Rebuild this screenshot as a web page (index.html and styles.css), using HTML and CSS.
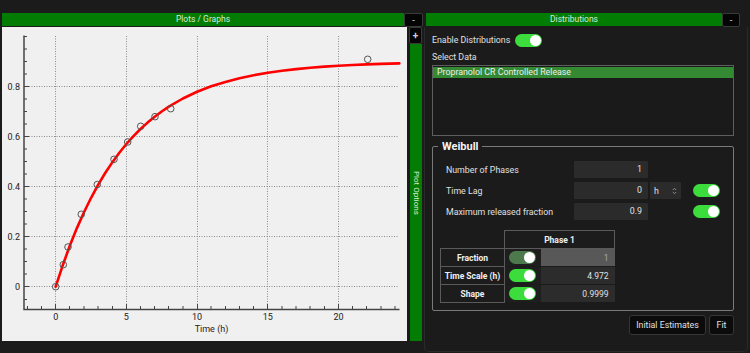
FILE: index.html
```html
<!DOCTYPE html>
<html>
<head>
<meta charset="utf-8">
<link rel="stylesheet" href="styles.css">
</head>
<body>
<div class="app">
  <section class="left">
    <div class="hdr">
      <div class="hdr-title">Plots / Graphs</div>
      <button class="mini">-</button>
    </div>
    <div class="left-body">
      <div class="plot">
        <svg width="405" height="314" viewBox="2 27 405 314" xmlns="http://www.w3.org/2000/svg">
          <g class="grid">
            <path d="M55.5 36V309M126.5 36V309M197.5 36V309M267.5 36V309M338.5 36V309"/>
            <path d="M24 286.5H399M24 236.5H399M24 186.5H399M24 136.5H399M24 86.5H399"/>
          </g>
          <g class="axis">
            <path d="M24 35.5V309.5H399.5"/>
            <path class="ticks" d="M55.5 309v-5M126.5 309v-5M197.5 309v-5M267.5 309v-5M338.5 309v-5
              M27.5 309v-3M41.5 309v-3M69.5 309v-3M84 309v-3M98 309v-3M112.5 309v-3M140.5 309v-3M154.5 309v-3M168.5 309v-3M183 309v-3
              M211 309v-3M225.5 309v-3M239.5 309v-3M253.5 309v-3M282 309v-3M296 309v-3M310 309v-3M324.5 309v-3M352.5 309v-3M366.5 309v-3M381 309v-3M395 309v-3
              M24 286.5h5M24 236.5h5M24 186.5h5M24 136.5h5M24 86.5h5
              M24 299.5h3M24 274h3M24 261.5h3M24 249h3M24 224h3M24 211.5h3M24 199h3M24 174h3M24 161.5h3M24 149h3M24 124h3M24 111.5h3M24 99h3M24 74h3M24 61.5h3M24 49h3M24 36.5h3"/>
          </g>
          <g class="labels">
            <text x="20" y="289.7" text-anchor="end">0</text>
            <text x="20" y="239.7" text-anchor="end">0.2</text>
            <text x="20" y="189.7" text-anchor="end">0.4</text>
            <text x="20" y="139.7" text-anchor="end">0.6</text>
            <text x="20" y="89.7" text-anchor="end">0.8</text>
            <text x="55.7" y="320" text-anchor="middle">0</text>
            <text x="126.4" y="320" text-anchor="middle">5</text>
            <text x="197.1" y="320" text-anchor="middle">10</text>
            <text x="267.8" y="320" text-anchor="middle">15</text>
            <text x="338.5" y="320" text-anchor="middle">20</text>
            <text x="211.5" y="332" text-anchor="middle">Time (h)</text>
          </g>
          <polyline class="curve" points="55.7,286.7 62.8,265.2 69.8,245.7 76.9,228.1 84.0,212.2 91.1,197.8 98.1,184.8 105.2,173.0 112.3,162.4 119.3,152.7 126.4,144.0 133.5,136.1 140.5,129.0 147.6,122.6 154.7,116.7 161.7,111.5 168.8,106.7 182.9,98.5 197.1,91.8 211.2,86.3 225.4,81.9 239.5,78.2 253.7,75.2 267.8,72.7 282.0,70.7 296.1,69.1 310.2,67.7 324.4,66.6 338.5,65.7 352.6,65.0 366.8,64.4 380.9,63.9 399.3,63.4"/>
          <g class="pts">
            <circle cx="55.7" cy="286.7" r="3.3"/>
            <circle cx="63.3" cy="264.7" r="3.3"/>
            <circle cx="68" cy="247" r="3.3"/>
            <circle cx="81.3" cy="214.3" r="3.3"/>
            <circle cx="97.3" cy="184.5" r="3.3"/>
            <circle cx="114" cy="159.3" r="3.3"/>
            <circle cx="127.7" cy="142" r="3.3"/>
            <circle cx="140.7" cy="126.3" r="3.3"/>
            <circle cx="155" cy="116.7" r="3.3"/>
            <circle cx="170.7" cy="108.7" r="3.3"/>
            <circle cx="367.7" cy="59.3" r="3.3"/>
          </g>
        </svg>
      </div>
      <div class="side">
        <button class="mini plus">+</button>
        <div class="side-bar"><span>Plot Options</span></div>
      </div>
    </div>
  </section>

  <section class="right">
    <div class="hdr">
      <div class="hdr-title rt">Distributions</div>
      <button class="mini rmini">-</button>
    </div>
    <div class="panel">
      <div class="enable-row">
        <span>Enable Distributions</span>
        <span class="toggle"></span>
      </div>
      <div class="caption">Select Data</div>
      <div class="list">
        <div class="list-item">Propranolol CR Controlled Release</div>
      </div>
      <fieldset class="group">
        <legend>Weibull</legend>
        <div class="form">
          <span class="lbl">Number of Phases</span>
          <span class="field">1</span>
          <span></span>
          <span></span>

          <span class="lbl">Time Lag</span>
          <span class="field">0</span>
          <span class="unit">h
            <svg width="5" height="8" viewBox="0 0 5 8"><path d="M0.8 3L2.5 1.3L4.2 3M0.8 5L2.5 6.7L4.2 5" fill="none" stroke="#9a9a9a" stroke-width="0.9"/></svg>
          </span>
          <span class="toggle"></span>

          <span class="lbl">Maximum released fraction</span>
          <span class="field">0.9</span>
          <span></span>
          <span class="toggle"></span>
        </div>
        <table class="phases">
          <tr>
            <th class="blank"></th>
            <th class="head" colspan="2">Phase 1</th>
          </tr>
          <tr>
            <th class="rowlbl">Fraction</th>
            <td class="tog"><span class="toggle dim"></span></td>
            <td class="val disabled">1</td>
          </tr>
          <tr>
            <th class="rowlbl">Time Scale (h)</th>
            <td class="tog"><span class="toggle"></span></td>
            <td class="val">4.972</td>
          </tr>
          <tr>
            <th class="rowlbl">Shape</th>
            <td class="tog"><span class="toggle"></span></td>
            <td class="val">0.9999</td>
          </tr>
        </table>
      </fieldset>
      <div class="actions">
        <button class="btn first">Initial Estimates</button>
        <button class="btn fit">Fit</button>
      </div>
    </div>
  </section>
</div>
</body>
</html>
```

FILE: styles.css
```css
* { box-sizing: border-box; }

html, body {
  margin: 0;
  padding: 0;
}

body {
  width: 750px;
  height: 353px;
  overflow: hidden;
  background: #1b1b1b;
  font-family: Roboto, "Liberation Sans", sans-serif;
  color: #e0e0e0;
  font-size: 8.8px;
}

.app {
  display: flex;
  gap: 1px;
  padding: 13px 0 0 2px;
}

/* headers */
.hdr {
  display: flex;
  align-items: flex-start;
  height: 14px;
}

.hdr-title {
  height: 13px;
  background: #037c03;
  color: #d8ecd8;
  font-size: 8.5px;
  line-height: 13px;
  text-align: center;
}

.left .hdr-title { width: 402px; }
.rt { width: 296px; margin-left: 2px; }

.mini {
  width: 19px;
  height: 14px;
  padding: 0;
  margin: 0;
  background: #050505;
  border: 1px solid #3a3a3a;
  border-radius: 2px;
  color: #d0d0d0;
  font-family: Roboto, "Liberation Sans", sans-serif;
  font-size: 8px;
  line-height: 11px;
  font-weight: bold;
}

.rmini { width: 18px; }

/* left column */
.left {
  width: 421px;
  display: flex;
  flex-direction: column;
}

.left-body {
  display: flex;
  height: 314px;
}

.plot {
  width: 405px;
  height: 314px;
  background: #f0f0f0;
}

.plot svg { display: block; }

.grid path {
  fill: none;
  stroke: #8c8c8c;
  stroke-width: 1;
  stroke-dasharray: 1 1.5;
}

.axis path {
  fill: none;
  stroke: #444;
  stroke-width: 1.5;
}

.axis .ticks { stroke-width: 1; }

.labels text {
  font-family: Roboto, "Liberation Sans", sans-serif;
  font-size: 9px;
  fill: #222;
}

.curve {
  fill: none;
  stroke: #ff0000;
  stroke-width: 2.6;
  stroke-linejoin: round;
  stroke-linecap: round;
}

.pts circle {
  fill: none;
  stroke: #555;
  stroke-width: 1;
}

.side {
  width: 14px;
  margin-left: 2px;
  display: flex;
  flex-direction: column;
}

.plus {
  width: 13px;
  height: 17px;
  font-size: 10px;
  line-height: 13px;
}

.side-bar {
  flex: 1;
  width: 12px;
  margin-left: 1px;
  background: #037c03;
  display: flex;
  align-items: center;
  justify-content: center;
}

.side-bar span {
  writing-mode: vertical-rl;
  font-size: 8px;
  color: #d8ecd8;
  line-height: 12px;
}

/* right column */
.right {
  width: 324px;
  display: flex;
  flex-direction: column;
}

.panel {
  height: 325px;
  border: 1px solid #2a2a2a;
  border-top: none;
  border-radius: 0 0 5px 5px;
  padding: 6px 13px 0 7px;
  display: flex;
  flex-direction: column;
}

.enable-row {
  display: flex;
  align-items: center;
  gap: 5px;
  height: 14px;
}

.toggle {
  display: inline-block;
  position: relative;
  width: 27px;
  height: 13px;
  border-radius: 7px;
  background: #3ddc3d;
}

.toggle::after {
  content: "";
  position: absolute;
  right: 1px;
  top: 1px;
  width: 11px;
  height: 11px;
  border-radius: 50%;
  background: #fff;
}

.toggle.dim { background: #4d7a4d; }

.caption {
  margin-top: 4px;
  height: 12px;
  line-height: 12px;
}

.list {
  margin-top: 2px;
  height: 71px;
  border: 1px solid #5e5e5e;
  padding-top: 1px;
  background: #1a1a1a;
}

.list-item {
  height: 11px;
  line-height: 11px;
  background: #338a33;
  color: #f0f0f0;
  padding-left: 4px;
}

.group {
  margin: 4px 0 0 0;
  border: 1px solid #7a7a7a;
  border-radius: 2px;
  padding: 8px 0 7px 13px;
  min-width: 0;
}

.group legend {
  margin-left: -8px;
  padding: 0 4px;
  font-size: 11px;
  font-weight: bold;
  line-height: 13px;
  color: #f4f4f4;
}

.form {
  display: grid;
  grid-template-columns: 126px 74px 31px 27px;
  column-gap: 2px;
  row-gap: 4px;
  grid-auto-rows: 17px;
  align-items: center;
}

.form .toggle { margin-left: 10px; }

.field {
  height: 17px;
  line-height: 17px;
  background: #2b2b2b;
  text-align: right;
  padding-right: 6px;
  border-radius: 1px;
}

.unit {
  height: 17px;
  background: #2b2b2b;
  border-radius: 1px;
  display: flex;
  align-items: center;
  justify-content: space-between;
  padding: 0 4px 0 4px;
}

.phases {
  margin: 10px 0 0 -6px;
  border-collapse: collapse;
  font-size: 8.5px;
}

.phases th, .phases td {
  padding: 0;
  height: 18px;
}

.phases .blank { width: 64px; }

.phases .head {
  border: 1px solid #5a5a5a;
  background: #1c1c1c;
  font-weight: bold;
  color: #f0f0f0;
  text-align: center;
}

.rowlbl {
  width: 64px;
  border: 1px solid #5a5a5a;
  background: #1c1c1c;
  font-weight: bold;
  color: #f0f0f0;
  text-align: center;
  white-space: nowrap;
}

.tog {
  width: 36px;
  background: #1e1e1e;
  text-align: center;
  border-bottom: 1px solid #1b1b1b;
}

.tog .toggle { vertical-align: middle; }

.val {
  width: 74px;
  background: #2c2c2c;
  text-align: right;
  padding-right: 6px !important;
  border-bottom: 1px solid #1b1b1b;
}

.val.disabled {
  background: #585858;
  color: #a8a8a8;
}

.actions {
  display: flex;
  justify-content: flex-end;
  gap: 3px;
  margin-top: 4px;
}

.btn {
  height: 20px;
  padding: 0 4px;
  margin: 0;
  background: #0b0b0b;
  border: 1px solid #363636;
  border-radius: 3px;
  color: #e0e0e0;
  font-family: Roboto, "Liberation Sans", sans-serif;
  font-size: 8.8px;
  white-space: nowrap;
}

.first { width: 77px; }
.fit { width: 25px; }
```
